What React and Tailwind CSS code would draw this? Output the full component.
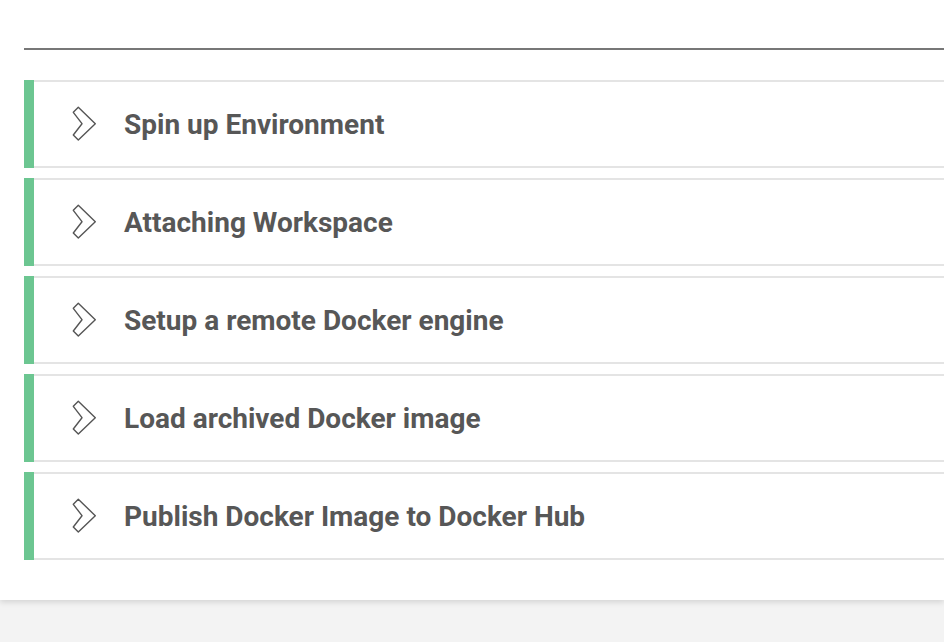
import React from "react";

const steps = [
  "Spin up Environment",
  "Attaching Workspace",
  "Setup a remote Docker engine",
  "Load archived Docker image",
  "Publish Docker Image to Docker Hub",
];

function Chevron() {
  return (
    <svg width="28" height="38" viewBox="0 0 28 38" className="shrink-0">
      <polygon
        points="3.3,7.3 8.3,2.3 25.3,18.7 8.3,35 3.3,30 12,18.7"
        fill="#ffffff"
        stroke="#555555"
        strokeWidth="1.4"
        strokeLinejoin="round"
      />
    </svg>
  );
}

export default function App() {
  return (
    <div className="min-h-[642px] bg-[#f3f3f3]" style={{ fontFamily: "Roboto, 'Liberation Sans', sans-serif" }}>
      <div className="bg-white pl-6 pt-12 pb-10 shadow-[0_2px_6px_rgba(0,0,0,0.14)]">
        <div className="h-[2px] bg-[#777777]" />
        <div className="mt-[30px] flex flex-col gap-[10px]">
          {steps.map((s) => (
            <div key={s} className="flex h-[88px] border-l-[10px] border-[#6cc691]">
              <div className="flex flex-1 items-center border-y-2 border-[#e4e4e4] pl-9">
                <Chevron />
                <span className="ml-[26px] mt-[2px] text-[28px] font-bold text-[#575757]">{s}</span>
              </div>
            </div>
          ))}
        </div>
      </div>
    </div>
  );
}
